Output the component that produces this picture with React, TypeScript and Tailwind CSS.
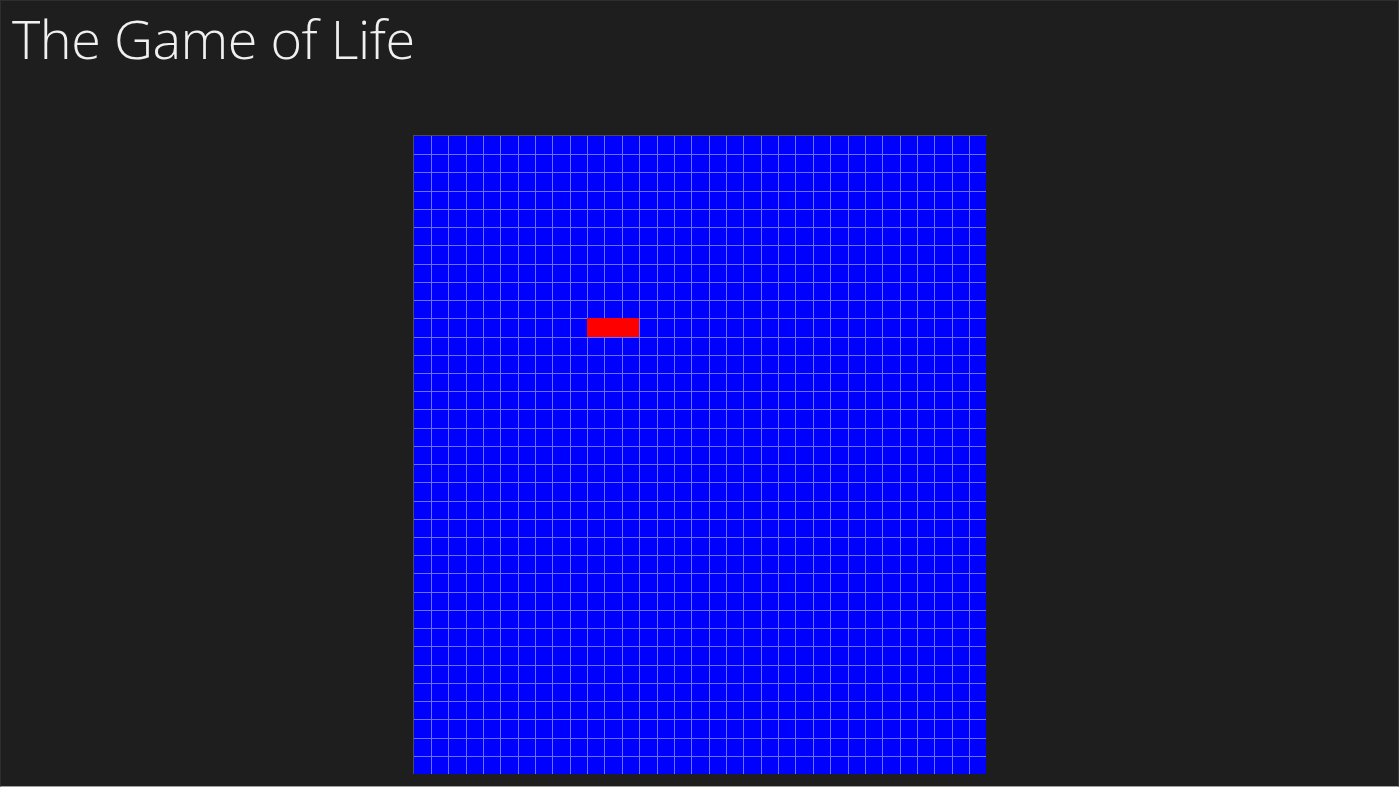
const COLS = 33
const ROWS = 35

// live cells: [row, col]
const alive = new Set(['10,10', '10,11', '10,12'])

function Cell({ row, col }: { row: number; col: number }) {
  const isAlive = alive.has(`${row},${col}`)
  const top = row === 0 ? 'border-t-0' : 'border-t'
  const left = col === 0 ? 'border-l-0' : 'border-l'
  const color = isAlive
    ? 'bg-[#ff0000] border-[#ff0000]'
    : 'bg-[#0000ff] border-[#6f6fff]'
  return <div className={`${top} ${left} ${color}`} />
}

export default function App() {
  const cells = []
  for (let r = 0; r < ROWS; r++) {
    for (let c = 0; c < COLS; c++) {
      cells.push(<Cell key={`${r}-${c}`} row={r} col={c} />)
    }
  }

  return (
    <div className="h-screen w-screen overflow-hidden bg-[#1e1e1e] border border-[#2e2e2e] border-b-[#a0a0a0] border-r-[#3a3a3a] flex flex-col">
      {/* Header */}
      <div className="h-[134px] pl-[11px]">
        <h1
          className="text-[54px] leading-[74px] font-light text-[#f0f0f0] tracking-[-0.5px]"
          style={{ fontFamily: '"Open Sans", "Noto Sans", sans-serif' }}
        >
          The Game of Life
        </h1>
      </div>

      {/* Board */}
      <div className="flex justify-center">
        <div className="w-[574px] h-[639px] border-t border-l border-[#4a4a5e] grid grid-cols-[repeat(33,minmax(0,1fr))] grid-rows-[repeat(35,minmax(0,1fr))]">
          {cells}
        </div>
      </div>
    </div>
  )
}
